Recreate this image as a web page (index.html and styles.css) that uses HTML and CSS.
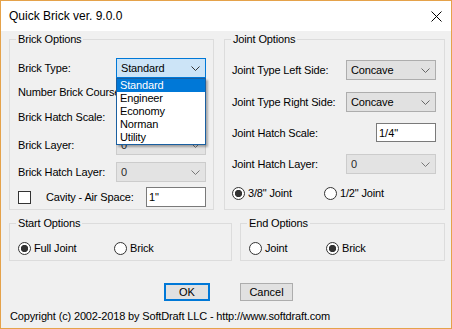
FILE: index.html
```html
<!DOCTYPE html>
<html lang="en">
<head>
    <meta charset="UTF-8">
    <title>Quick Brick ver. 9.0.0</title>
    <link rel="stylesheet" href="styles.css">
</head>
<body>
<div class="window">
    <div class="titlebar">
        <span class="title">Quick Brick ver. 9.0.0</span>
        <svg class="close" width="11" height="11" viewBox="0 0 11 11">
            <path d="M0.5 0.5 L10.5 10.5 M10.5 0.5 L0.5 10.5" stroke="#000" stroke-width="1" fill="none"/>
        </svg>
    </div>

    <div class="client">
        <div class="groups">
            <fieldset class="group brick">
                <legend>Brick Options</legend>
                <div class="brick-grid">
                    <span class="lbl">Brick Type:</span>
                    <div class="combo-wrap">
                        <div class="combo focused">
                            <span>Standard</span>
                            <svg class="chev" width="9" height="5" viewBox="0 0 9 5"><path d="M0.5 0.5 L4.5 4.5 L8.5 0.5" fill="none" stroke="#333"/></svg>
                        </div>
                        <ul class="droplist">
                            <li class="sel">Standard</li>
                            <li>Engineer</li>
                            <li>Economy</li>
                            <li>Norman</li>
                            <li>Utility</li>
                        </ul>
                    </div>

                    <span class="lbl">Number Brick Courses:</span>
                    <input class="txt" type="text" value="">

                    <span class="lbl">Brick Hatch Scale:</span>
                    <input class="txt" type="text" value="">

                    <span class="lbl">Brick Layer:</span>
                    <div class="combo disabled">
                        <span>0</span>
                        <svg class="chev" width="9" height="5" viewBox="0 0 9 5"><path d="M0.5 0.5 L4.5 4.5 L8.5 0.5" fill="none" stroke="#777"/></svg>
                    </div>

                    <span class="lbl">Brick Hatch Layer:</span>
                    <div class="combo disabled">
                        <span>0</span>
                        <svg class="chev" width="9" height="5" viewBox="0 0 9 5"><path d="M0.5 0.5 L4.5 4.5 L8.5 0.5" fill="none" stroke="#777"/></svg>
                    </div>

                    <div class="cavity-row">
                        <span class="check"></span>
                        <span class="cavity-lbl">Cavity - Air Space:</span>
                        <input class="txt" type="text" value="1&quot;">
                    </div>
                </div>
            </fieldset>

            <fieldset class="group joint">
                <legend>Joint Options</legend>
                <div class="joint-grid">
                    <span class="lbl">Joint Type Left Side:</span>
                    <div class="combo">
                        <span>Concave</span>
                        <svg class="chev" width="9" height="5" viewBox="0 0 9 5"><path d="M0.5 0.5 L4.5 4.5 L8.5 0.5" fill="none" stroke="#666"/></svg>
                    </div>

                    <span class="lbl">Joint Type Right Side:</span>
                    <div class="combo">
                        <span>Concave</span>
                        <svg class="chev" width="9" height="5" viewBox="0 0 9 5"><path d="M0.5 0.5 L4.5 4.5 L8.5 0.5" fill="none" stroke="#666"/></svg>
                    </div>

                    <span class="lbl">Joint Hatch Scale:</span>
                    <input class="txt short" type="text" value="1/4&quot;">

                    <span class="lbl">Joint Hatch Layer:</span>
                    <div class="combo disabled">
                        <span>0</span>
                        <svg class="chev" width="9" height="5" viewBox="0 0 9 5"><path d="M0.5 0.5 L4.5 4.5 L8.5 0.5" fill="none" stroke="#777"/></svg>
                    </div>

                    <div class="radio-row">
                        <label class="opt w92"><span class="radio on"></span>3/8" Joint</label>
                        <label class="opt"><span class="radio"></span>1/2" Joint</label>
                    </div>
                </div>
            </fieldset>
        </div>

        <div class="groups lower">
            <fieldset class="group start">
                <legend>Start Options</legend>
                <div class="radio-row inset">
                    <label class="opt w96"><span class="radio on"></span>Full Joint</label>
                    <label class="opt"><span class="radio"></span>Brick</label>
                </div>
            </fieldset>
            <fieldset class="group end">
                <legend>End Options</legend>
                <div class="radio-row inset">
                    <label class="opt w77"><span class="radio"></span>Joint</label>
                    <label class="opt"><span class="radio on"></span>Brick</label>
                </div>
            </fieldset>
        </div>

        <div class="buttons">
            <button class="btn default">OK</button>
            <button class="btn cancel">Cancel</button>
        </div>

        <div class="copyright">Copyright (c) 2002-2018 by SoftDraft LLC - http://www.softdraft.com</div>
    </div>
</div>
</body>
</html>
```

FILE: styles.css
```css
body {
    margin: 0;
    font-family: "Liberation Sans", Arial, sans-serif;
    font-size: 11px;
    letter-spacing: -0.15px;
    color: #000;
}
.window {
    width: 452px;
    height: 329px;
    box-sizing: border-box;
    border: 1px solid #e5a24a;
    background: #f0f0f0;
    display: flex;
    flex-direction: column;
}
.titlebar {
    height: 30px;
    flex: none;
    background: #fff;
    display: flex;
    align-items: center;
    justify-content: space-between;
    padding: 0 9px 0 8px;
}
.title {
    font-size: 12px;
    letter-spacing: 0;
}
.client {
    flex: 1;
    padding: 2px 6px 0 8px;
}
.groups {
    display: flex;
    gap: 10px;
}
.groups.lower {
    margin-top: 7px;
    gap: 8px;
}
.group {
    margin: 0;
    padding: 0;
    min-width: 0;
    border: 1px solid #dcdcdc;
    box-sizing: border-box;
}
.group legend {
    margin-left: 6px;
    padding: 0 2px;
    line-height: 13px;
}
.brick {
    width: 205px;
    height: 177px;
}
.joint {
    width: 221px;
    height: 177px;
}
.start {
    width: 223px;
    height: 44px;
}
.end {
    width: 205px;
    height: 44px;
}
.lbl {
    line-height: 20px;
    white-space: nowrap;
}
.brick-grid {
    display: grid;
    grid-template-columns: 98px 90px;
    grid-template-rows: 24px 25px 28px 27px 25px 20px;
    align-items: start;
    padding: 12px 0 0 8px;
}
.joint-grid {
    display: grid;
    grid-template-columns: 114px 90px;
    grid-template-rows: 32px 31px 31px 30px 18px;
    align-items: start;
    padding: 14px 0 0 7px;
}

/* combo boxes */
.combo-wrap {
    position: relative;
}
.combo {
    width: 90px;
    height: 20px;
    box-sizing: border-box;
    display: flex;
    align-items: center;
    justify-content: space-between;
    padding: 0 5px 0 4px;
    background: #e1e1e1;
    border: 1px solid #adadad;
}
.combo.focused {
    background: #cce4f7;
    border-color: #0078d7;
}
.combo.disabled {
    background: #e3e3e3;
    border-color: #cccccc;
    color: #2a2a2a;
}
.droplist {
    position: absolute;
    top: 20px;
    left: 0;
    width: 90px;
    box-sizing: border-box;
    margin: 0;
    padding: 0;
    list-style: none;
    background: #fff;
    border: 1px solid #1a5fa0;
    box-shadow: 2px 2px 2px rgba(0, 0, 0, 0.3);
    z-index: 5;
}
.droplist li {
    height: 13px;
    line-height: 13px;
    padding-left: 3px;
}
.droplist li.sel {
    background: #0078d7;
    color: #fff;
}

/* text boxes */
.txt {
    width: 60px;
    height: 20px;
    box-sizing: border-box;
    justify-self: end;
    margin: 0;
    padding: 0 2px;
    border: 1px solid #7a7a7a;
    background: #fff;
    font: inherit;
    color: #000;
}
.txt.short {
    height: 19px;
}

.cavity-row {
    grid-column: 1 / -1;
    display: flex;
    align-items: center;
    height: 20px;
}
.check {
    width: 13px;
    height: 13px;
    box-sizing: border-box;
    border: 1px solid #333;
    background: #fff;
}
.cavity-lbl {
    margin-left: 15px;
}
.cavity-row .txt {
    margin-left: auto;
}

/* radios */
.radio-row {
    grid-column: 1 / -1;
    display: flex;
    align-items: center;
    height: 18px;
}
.radio-row.inset {
    padding: 9px 0 0 8px;
}
.opt {
    display: flex;
    align-items: center;
    gap: 3px;
}
.w92 { width: 92px; }
.w96 { width: 96px; }
.w77 { width: 77px; }
.radio {
    width: 13px;
    height: 13px;
    box-sizing: border-box;
    border-radius: 50%;
    border: 1px solid #333;
    background: #fff;
}
.radio.on {
    background: radial-gradient(circle, #333 0 3.4px, #fff 3.9px);
}

.buttons {
    display: flex;
    justify-content: center;
    gap: 30px;
    margin-top: 22px;
    padding-left: 3px;
}
.btn {
    height: 18px;
    box-sizing: border-box;
    margin: 0;
    padding: 0;
    font: inherit;
    color: #000;
    background: #e1e1e1;
    border: 1px solid #adadad;
}
.btn.default {
    width: 46px;
    border: 2px solid #0078d7;
}
.btn.cancel {
    width: 53px;
}
.copyright {
    margin-top: 9px;
    line-height: 13px;
    padding-left: 1px;
}
```
